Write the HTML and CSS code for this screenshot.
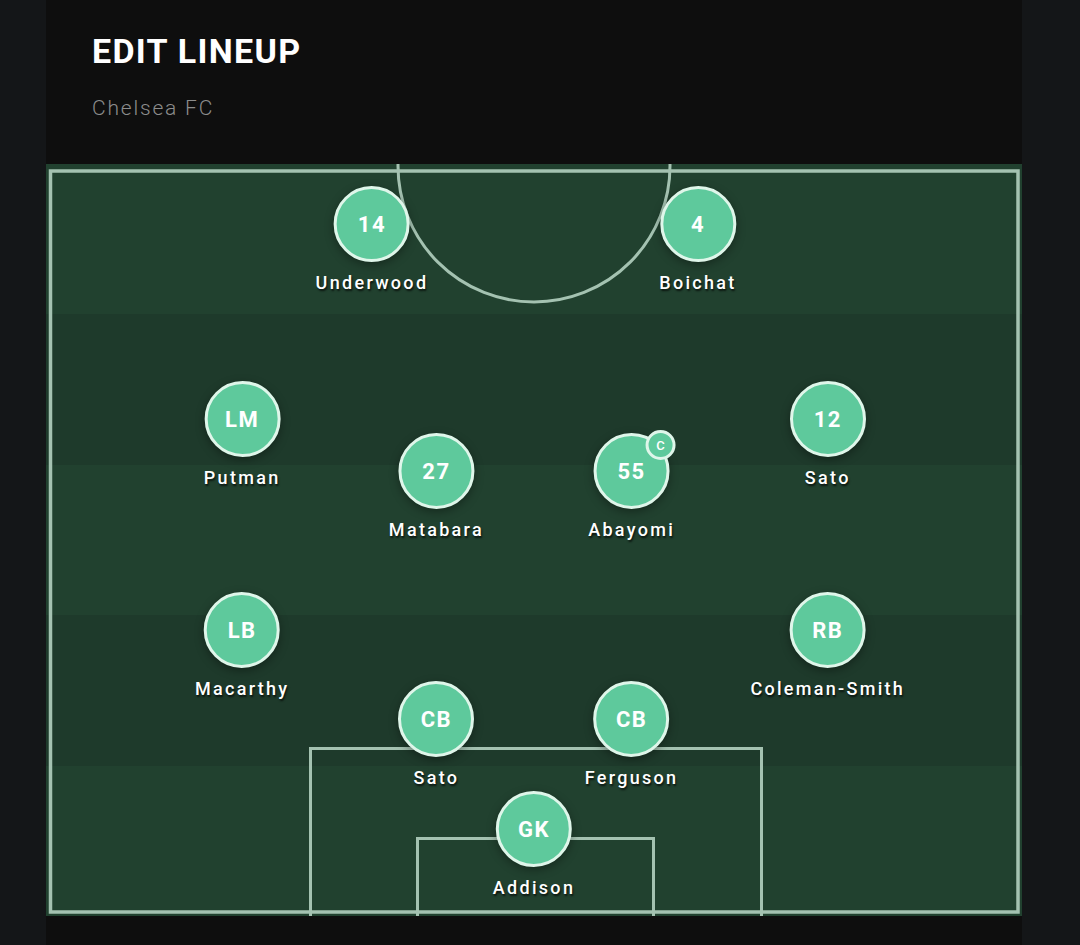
FILE: index.html
```html
<!DOCTYPE html>
<html lang="en">

<head>
    <meta charset="UTF-8">
    <meta name="viewport" content="width=device-width, initial-scale=1.0">
    <title>Edit Lineup</title>
    <link rel="stylesheet" href="styles.css">
</head>

<body>
    <main class="panel">
        <header class="head">
            <h1>EDIT LINEUP</h1>
            <p class="team">Chelsea FC</p>
        </header>

        <section class="pitch">
            <div class="stripes">
                <div></div>
                <div></div>
                <div></div>
                <div></div>
                <div></div>
            </div>

            <!-- pitch markings -->
            <svg class="lines" viewBox="0 0 976 752" xmlns="http://www.w3.org/2000/svg">
                <rect x="4.5" y="7" width="967.5" height="741" fill="none" stroke="#a4c2b1" stroke-width="3.5" />
                <circle cx="488" cy="2" r="136" fill="none" stroke="#a4c2b1" stroke-width="3" />
                <rect x="264.5" y="584.5" width="451" height="170" fill="none" stroke="#a4c2b1" stroke-width="3" />
                <rect x="371.5" y="674.5" width="236" height="80" fill="none" stroke="#a4c2b1" stroke-width="3" />
            </svg>

            <div class="player" style="--x: 33.4%; --y: 22px">
                <div class="dot">14</div>
                <span class="name">Underwood</span>
            </div>
            <div class="player" style="--x: 66.8%; --y: 22px">
                <div class="dot">4</div>
                <span class="name">Boichat</span>
            </div>

            <div class="player" style="--x: 20.1%; --y: 217px">
                <div class="dot">LM</div>
                <span class="name">Putman</span>
            </div>
            <div class="player" style="--x: 40%; --y: 269px">
                <div class="dot">27</div>
                <span class="name">Matabara</span>
            </div>
            <div class="player" style="--x: 60%; --y: 269px">
                <div class="dot">55<span class="captain">C</span></div>
                <span class="name">Abayomi</span>
            </div>
            <div class="player" style="--x: 80.1%; --y: 217px">
                <div class="dot">12</div>
                <span class="name">Sato</span>
            </div>

            <div class="player" style="--x: 20.1%; --y: 428px">
                <div class="dot">LB</div>
                <span class="name">Macarthy</span>
            </div>
            <div class="player" style="--x: 80.1%; --y: 428px">
                <div class="dot">RB</div>
                <span class="name">Coleman-Smith</span>
            </div>
            <div class="player" style="--x: 40%; --y: 517px">
                <div class="dot">CB</div>
                <span class="name">Sato</span>
            </div>
            <div class="player" style="--x: 60%; --y: 517px">
                <div class="dot">CB</div>
                <span class="name">Ferguson</span>
            </div>

            <div class="player" style="--x: 50%; --y: 627px">
                <div class="dot">GK</div>
                <span class="name">Addison</span>
            </div>
        </section>
    </main>
</body>

</html>
```

FILE: styles.css
```css
* {
    box-sizing: border-box;
    font-family: Roboto, "Liberation Sans", sans-serif;
}

body {
    margin: 0;
    background-color: #141618;
    height: 945px;
    overflow: hidden;
}

.panel {
    margin-left: 46px;
    width: 976px;
    height: 945px;
    background-color: #0e0e0e;
}

.head {
    padding: 31px 46px 0;
    height: 164px;
}

.head h1 {
    margin: 0;
    color: #fff;
    font-size: 34px;
    font-weight: 700;
    letter-spacing: 1.3px;
}

.team {
    margin: 25px 0 0;
    color: #8c8c8c;
    font-size: 21px;
    font-weight: 300;
    letter-spacing: 1.8px;
}

.pitch {
    position: relative;
    height: 752px;
    overflow: hidden;
}

.stripes {
    display: flex;
    flex-direction: column;
    height: 100%;
}

.stripes div {
    flex: 1;
    background-color: #21412f;
}

.stripes div:nth-child(even) {
    background-color: #1e3a2b;
}

.lines {
    position: absolute;
    inset: 0;
    width: 100%;
    height: 100%;
}

.player {
    position: absolute;
    left: var(--x);
    top: var(--y);
    transform: translateX(-50%);
    display: flex;
    flex-direction: column;
    align-items: center;
    gap: 10px;
}

.dot {
    position: relative;
    width: 76px;
    height: 76px;
    border-radius: 50%;
    border: 3px solid #dff6ea;
    background-color: #5ec99c;
    box-shadow: 0 3px 10px rgba(0, 0, 0, 0.35);
    display: flex;
    align-items: center;
    justify-content: center;
    color: #fff;
    font-size: 22px;
    font-weight: 700;
    letter-spacing: 1.5px;
}

.captain {
    position: absolute;
    top: -6px;
    right: -9px;
    width: 30px;
    height: 30px;
    border-radius: 50%;
    border: 3px solid #dff6ea;
    background-color: #5ec99c;
    display: flex;
    align-items: center;
    justify-content: center;
    font-size: 13px;
    font-weight: 500;
    letter-spacing: 0;
}

.name {
    color: #fff;
    font-size: 18px;
    font-weight: 500;
    letter-spacing: 2.3px;
    white-space: nowrap;
    text-shadow: 1px 2px 2px rgba(0, 0, 0, 0.7);
}
```
